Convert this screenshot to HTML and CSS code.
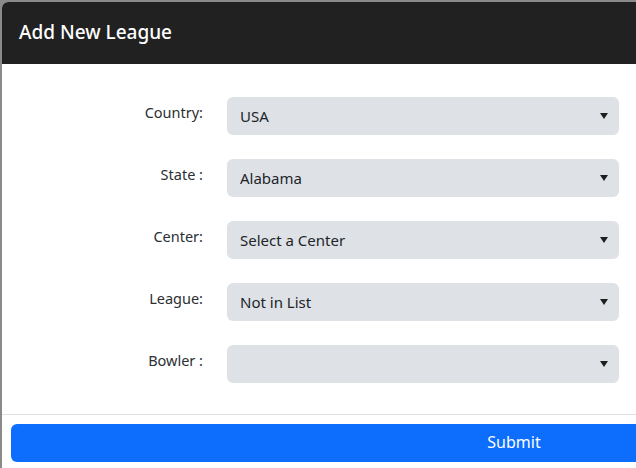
FILE: index.html
```html
<!DOCTYPE html>
<html lang="en">
<head>
<meta charset="utf-8">
<title>Add New League</title>
<link rel="stylesheet" href="styles.css">
</head>
<body>
<div class="dialog">
  <div class="dialog-header">
    <h1 class="dialog-title">Add New League</h1>
  </div>
  <form class="dialog-body">
    <label class="field-label" for="country">Country:</label>
    <div class="select-wrap">
      <select id="country" class="field-select"><option>USA</option></select>
    </div>
    <label class="field-label" for="state">State :</label>
    <div class="select-wrap">
      <select id="state" class="field-select"><option>Alabama</option></select>
    </div>
    <label class="field-label" for="center">Center:</label>
    <div class="select-wrap">
      <select id="center" class="field-select"><option>Select a Center</option></select>
    </div>
    <label class="field-label" for="league">League:</label>
    <div class="select-wrap">
      <select id="league" class="field-select"><option>Not in List</option></select>
    </div>
    <label class="field-label" for="bowler">Bowler :</label>
    <div class="select-wrap">
      <select id="bowler" class="field-select"><option></option></select>
    </div>
  </form>
  <div class="dialog-footer">
    <button type="button" class="submit-btn">Submit</button>
  </div>
</div>
</body>
</html>
```
FILE: styles.css
```css
html, body {
  margin: 0;
  padding: 0;
}
body {
  background: #8a8a8a;
  padding: 2px 0 0 2px;
  height: 466px;
  overflow: hidden;
  font-family: "Noto Sans", "Open Sans", sans-serif;
}
.dialog {
  height: 466px;
  background: #ffffff;
  border-top-left-radius: 6px;
  overflow: hidden;
}
.dialog-header {
  height: 62px;
  background: #212121;
  display: flex;
  align-items: center;
  padding: 0 17px;
}
.dialog-title {
  margin: 0;
  color: #ffffff;
  font-size: 19px;
  font-weight: 500;
  padding-bottom: 2px;
}
.dialog-body {
  margin: 0;
  padding: 33px 0 31px 0;
  display: grid;
  grid-template-columns: 201px 392px;
  column-gap: 24px;
  row-gap: 24px;
  border-bottom: 1px solid #dee2e6;
}
.field-label {
  text-align: right;
  align-self: center;
  font-size: 14.5px;
  color: #2b2f33;
  padding-bottom: 8px;
}
.select-wrap {
  position: relative;
  height: 38px;
}
.select-wrap::after {
  content: "";
  position: absolute;
  right: 11px;
  top: 16px;
  border-left: 4px solid transparent;
  border-right: 4px solid transparent;
  border-top: 6px solid #1e1e1e;
  pointer-events: none;
}
.field-select {
  -webkit-appearance: none;
  appearance: none;
  width: 100%;
  height: 38px;
  border: none;
  border-radius: 6px;
  background: #dee2e6;
  color: #212529;
  font-family: inherit;
  font-size: 15px;
  padding: 0 13px;
  margin: 0;
}
.dialog-footer {
  padding: 9px 0 0 9px;
}
.submit-btn {
  display: block;
  width: 100%;
  height: 38px;
  border: none;
  border-radius: 6px 0 0 6px;
  background: #0d6efd;
  color: #ffffff;
  font-family: inherit;
  font-size: 16px;
  text-align: center;
  padding: 0 0 2px 381px;
}
```
